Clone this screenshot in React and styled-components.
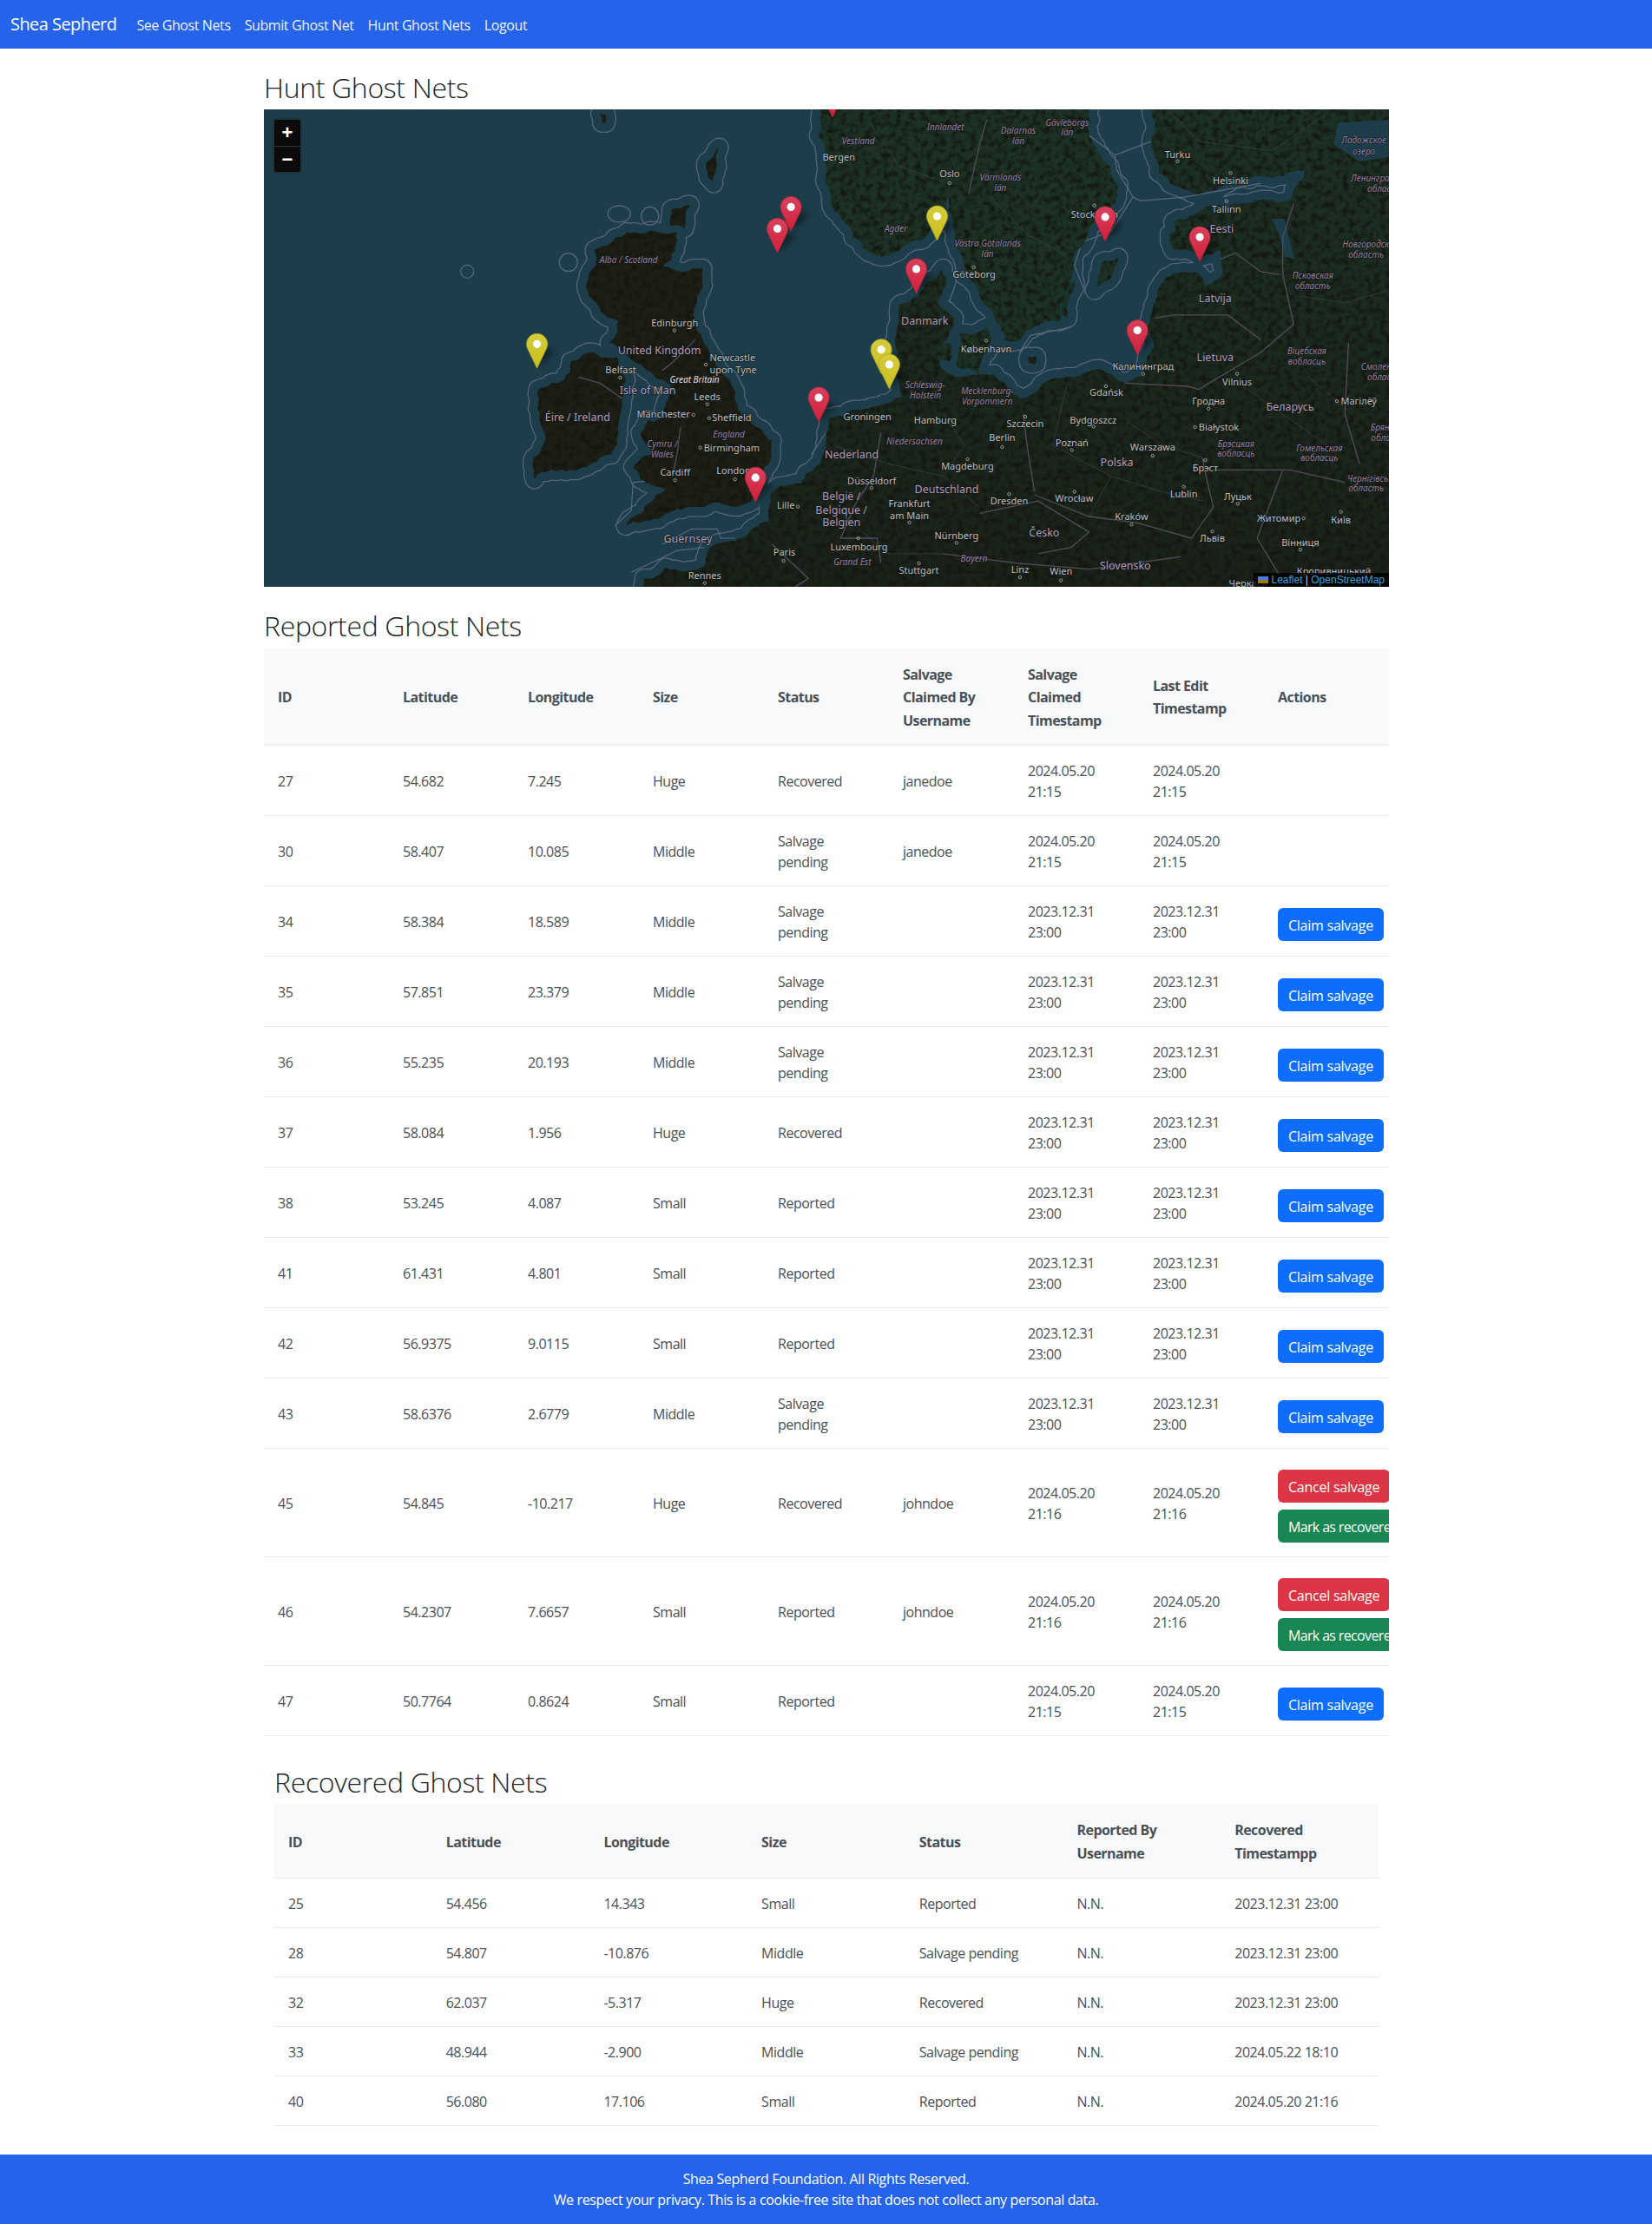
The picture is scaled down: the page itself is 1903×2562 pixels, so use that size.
import React from 'react'
import styled, { createGlobalStyle } from 'styled-components'

const GlobalStyle = createGlobalStyle`
  * { box-sizing: border-box; }
  html, body { margin: 0; padding: 0; }
  body {
    font-family: 'Open Sans', 'Noto Sans', sans-serif;
    font-size: 16px;
    line-height: 24px;
    letter-spacing: -0.56px;
    color: #212529;
    background: #fff;
  }
`

const reported = [
  ['27', '54.682', '7.245', 'Huge', 'Recovered', 'janedoe', '2024.05.20 21:15', '2024.05.20 21:15', 'none'],
  ['30', '58.407', '10.085', 'Middle', 'Salvage pending', 'janedoe', '2024.05.20 21:15', '2024.05.20 21:15', 'none'],
  ['34', '58.384', '18.589', 'Middle', 'Salvage pending', '', '2023.12.31 23:00', '2023.12.31 23:00', 'claim'],
  ['35', '57.851', '23.379', 'Middle', 'Salvage pending', '', '2023.12.31 23:00', '2023.12.31 23:00', 'claim'],
  ['36', '55.235', '20.193', 'Middle', 'Salvage pending', '', '2023.12.31 23:00', '2023.12.31 23:00', 'claim'],
  ['37', '58.084', '1.956', 'Huge', 'Recovered', '', '2023.12.31 23:00', '2023.12.31 23:00', 'claim'],
  ['38', '53.245', '4.087', 'Small', 'Reported', '', '2023.12.31 23:00', '2023.12.31 23:00', 'claim'],
  ['41', '61.431', '4.801', 'Small', 'Reported', '', '2023.12.31 23:00', '2023.12.31 23:00', 'claim'],
  ['42', '56.9375', '9.0115', 'Small', 'Reported', '', '2023.12.31 23:00', '2023.12.31 23:00', 'claim'],
  ['43', '58.6376', '2.6779', 'Middle', 'Salvage pending', '', '2023.12.31 23:00', '2023.12.31 23:00', 'claim'],
  ['45', '54.845', '-10.217', 'Huge', 'Recovered', 'johndoe', '2024.05.20 21:16', '2024.05.20 21:16', 'mine'],
  ['46', '54.2307', '7.6657', 'Small', 'Reported', 'johndoe', '2024.05.20 21:16', '2024.05.20 21:16', 'mine'],
  ['47', '50.7764', '0.8624', 'Small', 'Reported', '', '2024.05.20 21:15', '2024.05.20 21:15', 'claim'],
]

const recovered = [
  ['25', '54.456', '14.343', 'Small', 'Reported', 'N.N.', '2023.12.31 23:00'],
  ['28', '54.807', '-10.876', 'Middle', 'Salvage pending', 'N.N.', '2023.12.31 23:00'],
  ['32', '62.037', '-5.317', 'Huge', 'Recovered', 'N.N.', '2023.12.31 23:00'],
  ['33', '48.944', '-2.900', 'Middle', 'Salvage pending', 'N.N.', '2024.05.22 18:10'],
  ['40', '56.080', '17.106', 'Small', 'Reported', 'N.N.', '2024.05.20 21:16'],
]

// map coords were read off two crops, hence the two converters
const L = (x, y) => [x / 2.376 - 4, y / 2.8 - 6]
const R = (x, y) => [x / 2.376 + 656, y / 2.8 - 6]
const path = (pts, closed = true) =>
  'M' + pts.map(p => p[0].toFixed(1) + ' ' + p[1].toFixed(1)).join('L') + (closed ? 'Z' : '')

// midpoint displacement so the coasts stop looking like straight polygons
let seed = 11
const rnd = () => {
  seed = (seed * 16807) % 2147483647
  return seed / 2147483647 - 0.5
}
function roughen(pts, depth = 3) {
  let cur = pts
  for (let d = 0; d < depth; d++) {
    const next = []
    cur.forEach((p, i) => {
      const q = cur[(i + 1) % cur.length]
      const len = Math.hypot(q[0] - p[0], q[1] - p[1])
      next.push(p)
      if (len > 3 && len < 200) {
        const k = rnd() * len * 0.3
        next.push([(p[0] + q[0]) / 2 - ((q[1] - p[1]) / len) * k, (p[1] + q[1]) / 2 + ((q[0] - p[0]) / len) * k])
      }
    })
    cur = next
  }
  return cur
}
const landL = arr => path(roughen(arr.map(p => L(p[0], p[1]))))
const landR = arr => path(roughen(arr.map(p => R(p[0], p[1]))))
const left = (arr, closed) => path(arr.map(p => L(p[0], p[1])), closed)
const right = (arr, closed) => path(arr.map(p => R(p[0], p[1])), closed)

const britain = landL([
  [970, 432], [1040, 418], [1140, 412], [1135, 470], [1100, 525], [1210, 530], [1205, 600], [1185, 680],
  [1195, 730], [1225, 790], [1250, 850], [1300, 930], [1310, 990], [1350, 1035], [1400, 1085], [1395, 1150],
  [1370, 1200], [1345, 1280], [1240, 1285], [1170, 1300], [1110, 1320], [1090, 1338], [1000, 1360],
  [1060, 1290], [1110, 1240], [1040, 1210], [1020, 1170], [1080, 1130], [1040, 1060], [1060, 1020],
  [1110, 1010], [1110, 960], [1130, 920], [1080, 880], [1040, 840], [1000, 800], [955, 770], [980, 700],
  [930, 670], [900, 620], [920, 520], [915, 470],
])
const ireland = landL([
  [900, 800], [930, 815], [975, 815], [1000, 890], [990, 960], [980, 1060], [960, 1130], [850, 1180],
  [750, 1210], [745, 1150], [780, 1080], [770, 1040], [760, 920], [830, 890], [850, 830],
])
const orkney = landL([[1125, 340], [1175, 325], [1160, 400], [1125, 395]])
const shetland = landL([[1220, 190], [1255, 140], [1250, 200], [1240, 255], [1225, 220]])
const faroe = landL([[930, 32], [945, 32], [945, 60], [935, 60]])
const continent = path(roughen([
  ...[[1040, 1600], [1050, 1530], [1110, 1495], [1215, 1490], [1225, 1440], [1310, 1400], [1395, 1345],
    [1395, 1265], [1480, 1225], [1520, 1170], [1540, 1130]].map(p => L(p[0], p[1])),
  ...[[-20, 1060], [-10, 1010], [60, 985], [150, 965], [190, 945], [175, 800], [180, 650], [230, 620], [300, 530],
    [310, 570], [285, 640], [330, 690], [300, 770], [290, 840], [350, 880], [440, 870], [510, 950], [640, 880],
    [740, 860], [800, 900], [840, 880], [880, 780], [860, 720], [880, 640], [910, 560], [960, 540], [990, 540],
    [1020, 590], [1060, 560], [1060, 470], [1010, 490], [930, 470], [920, 420], [960, 375], [1010, 340], [1100, 320],
    [1250, 310], [1290, 215], [1170, 232], [1050, 275], [960, 275], [890, 220], [870, 120], [865, 0], [1600, 0],
    [1600, 1650], [-1400, 1650]].map(p => R(p[0], p[1])),
]))
const scandinavia = landR([
  [-30, 0], [-40, 100], [-20, 190], [-10, 280], [0, 340], [30, 380], [90, 470], [150, 490], [220, 440], [270, 400],
  [310, 340], [310, 290], [330, 400], [340, 470], [400, 620], [440, 680], [470, 760], [510, 760], [530, 730],
  [620, 700], [640, 600], [690, 440], [700, 400], [760, 330], [780, 260], [720, 150], [700, 100], [700, 0],
])
const zealand = landR([[345, 740], [420, 720], [425, 790], [400, 870], [340, 850]])
const funen = landR([[270, 780], [320, 770], [320, 830], [280, 830]])
const gotland = landR([[715, 600], [735, 510], [780, 495], [750, 570]])
const bornholm = landR([[535, 815], [555, 815], [555, 835], [535, 835]])
const oland = landR([[625, 680], [660, 570], [640, 690]])
const saaremaa = landR([[930, 380], [970, 370], [985, 400], [940, 440]])

const greenLand = [scandinavia, zealand, funen, gotland, oland, saaremaa]
const darkLand = [britain, ireland, orkney, shetland, faroe, bornholm]
const allLand = [...darkLand, ...greenLand, continent]

const borders = [
  left([[870, 880], [930, 900], [990, 950]], false),
  left([[1190, 760], [1130, 830], [1100, 860]], false),
  left([[1150, 1040], [1140, 1130], [1130, 1190]], false),
  left([[1400, 1420], [1500, 1530], [1460, 1560]], false),
  right([[520, 1000], [530, 1100], [550, 1250]], false),
  right([[550, 1260], [700, 1330], [830, 1350], [980, 1400]], false),
  right([[1010, 1140], [1020, 1200], [1040, 1300], [980, 1400]], false),
  right([[800, 900], [970, 910], [1000, 920], [1170, 800], [1260, 710], [1230, 550]], false),
  right([[880, 690], [930, 680], [1080, 680], [1170, 760]], false),
  right([[1060, 500], [1100, 480], [1170, 540], [1220, 550]], false),
  right([[1230, 550], [1230, 430], [1260, 320]], false),
  right([[1040, 1180], [1250, 1180], [1400, 1220]], false),
  right([[1410, 770], [1400, 1000], [1440, 1160]], false),
  right([[420, 50], [400, 130], [370, 290]], false),
  right([[130, 1060], [110, 1200], [60, 1290]], false),
  right([[60, 1290], [20, 1400], [120, 1400], [130, 1480]], false),
  right([[400, 1320], [560, 1280], [700, 1380], [650, 1430], [560, 1450]], false),
  right([[300, 1450], [500, 1480], [700, 1500], [950, 1460]], false),
  right([[1230, 1180], [1160, 1400], [1240, 1557]], false),
]

const faintBorders = [
  right([[300, 1000], [360, 1100], [300, 1200], [400, 1300]], false),
  right([[640, 900], [600, 1100], [760, 1200], [700, 1330]], false),
  right([[800, 1020], [900, 1100], [1010, 1140]], false),
  right([[1110, 900], [1230, 1000], [1350, 1100]], false),
  right([[430, 300], [530, 420], [640, 490]], false),
  right([[900, 0], [1000, 120], [1200, 150], [1350, 30]], false),
  right([[1280, 620], [1400, 640], [1520, 600]], false),
  right([[1300, 880], [1420, 1000]], false),
  right([[100, 60], [180, 200], [300, 250]], false),
  right([[0, 1100], [150, 1160], [300, 1200]], false),
  right([[0, 1300], [150, 1450], [300, 1450]], false),
  right([[760, 1200], [900, 1250], [1010, 1280]], false),
]
const seaLines = [
  right([[700, 100], [770, 165], [870, 120]], false),
  right([[770, 165], [775, 210], [820, 300], [840, 312], [960, 300], [1170, 255]], false),
  right([[820, 300], [760, 410], [680, 445], [660, 520], [690, 610]], false),
  right([[650, 720], [540, 745], [510, 800]], false),
  right([[-10, 1040], [-60, 1130]], false),
  left([[1020, 1220], [1120, 1210], [1190, 1240]], false),
  left([[1020, 1220], [1015, 1310], [970, 1360]], false),
  left([[1100, 1420], [1180, 1370], [1250, 1370], [1260, 1400], [1300, 1400]], false),
  left([[1015, 1510], [1140, 1440], [1215, 1430]], false),
]

const labels = [
  ['city', L(1134, 718), 'Edinburgh'], ['city', L(1292, 830), 'Newcastle'], ['city', L(1294, 868), 'upon Tyne'],
  ['city', L(986, 868), 'Belfast'], ['city', L(1223, 956), 'Leeds'], ['city', L(1103, 1012), 'Manchester'],
  ['city', L(1290, 1023), 'Sheffield'], ['city', L(1290, 1120), 'Birmingham'], ['city', L(1135, 1199), 'Cardiff'],
  ['city', L(1295, 1192), 'London'], ['city', L(1438, 1306), 'Lille'], ['city', L(1434, 1455), 'Paris'],
  ['city', L(1216, 1532), 'Rennes'], ['city', L(1583, 181), 'Bergen'],
  ['country', L(1092, 807), 'United Kingdom'], ['country', L(1060, 936), 'Isle of Man'],
  ['country', L(868, 1022), 'Éire / Ireland'], ['country', L(1170, 1414), 'Guernsey'],
  ['country', L(1590, 1278), 'België /'], ['country', L(1590, 1321), 'Belgique /'], ['country', L(1590, 1362), 'Belgien'],
  ['region', L(1008, 512), 'Alba / Scotland'], ['region', L(1282, 1074), 'England'], ['region', L(1100, 1106), 'Cymru /'],
  ['region', L(1100, 1139), 'Wales'], ['white', L(1188, 899), 'Great Britain'],
  ['region', R(307, 84), 'Innlandet'], ['region', R(506, 96), 'Dalarnas'], ['region', R(506, 129), 'län'],
  ['region', R(640, 69), 'Gävleborgs'], ['region', R(640, 102), 'län'], ['region', R(68, 129), 'Vestland'],
  ['region', R(457, 247), 'Värmlands'], ['region', R(457, 281), 'län'], ['region', R(171, 412), 'Agder'],
  ['region', R(422, 458), 'Västra Götalands'], ['region', R(422, 492), 'län'], ['region', R(1452, 127), 'Ладожское'],
  ['region', R(1452, 161), 'озеро'], ['region', R(1500, 250), 'Ленинградская'], ['region', R(1510, 283), 'область'],
  ['region', R(1470, 463), 'Новгородская'], ['region', R(1458, 496), 'область'], ['region', R(1312, 562), 'Псковская'],
  ['region', R(1312, 595), 'область'], ['region', R(1296, 807), 'Віцебская'], ['region', R(1296, 841), 'вобласць'],
  ['region', R(1510, 858), 'Смоленская'], ['region', R(1510, 891), 'область'], ['region', R(251, 915), 'Schleswig-'],
  ['region', R(252, 948), 'Holstein'], ['region', R(421, 936), 'Mecklenburg-'], ['region', R(421, 970), 'Vorpommern'],
  ['region', R(222, 1098), 'Niedersachsen'], ['region', R(1102, 1105), 'Брэсцкая'], ['region', R(1102, 1138), 'вобласць'],
  ['region', R(1330, 1119), 'Гомельская'], ['region', R(1330, 1152), 'вобласць'], ['region', R(1475, 1217), 'Чернігівська'],
  ['region', R(1458, 1250), 'область'], ['region', R(385, 1476), 'Bayern'], ['region', R(52, 1488), 'Grand Est'],
  ['region', R(1520, 1053), 'Брянская'], ['region', R(1520, 1086), 'область'],
  ['city', R(318, 236), 'Oslo'], ['city', R(942, 173), 'Turku'], ['city', R(1087, 258), 'Helsinki'],
  ['city', R(1076, 351), 'Tallinn'], ['city', R(715, 368), 'Stockholm'], ['city', R(385, 559), 'Göteborg'],
  ['city', R(418, 800), 'København'], ['city', R(848, 858), 'Калининград'], ['city', R(747, 942), 'Gdańsk'],
  ['city', R(93, 1018), 'Groningen'], ['city', R(279, 1029), 'Hamburg'], ['city', R(525, 1042), 'Szczecin'],
  ['city', R(711, 1029), 'Bydgoszcz'], ['city', R(462, 1087), 'Berlin'], ['city', R(653, 1104), 'Poznań'],
  ['city', R(874, 1116), 'Warszawa'], ['city', R(1105, 908), 'Vilnius'], ['city', R(1027, 970), 'Гродна'],
  ['city', R(1055, 1052), 'Białystok'], ['city', R(1438, 970), 'Магілёў'], ['city', R(367, 1179), 'Magdeburg'],
  ['city', R(1018, 1183), 'Брэст'], ['city', R(105, 1225), 'Düsseldorf'], ['city', R(208, 1300), 'Frankfurt'],
  ['city', R(208, 1338), 'am Main'], ['city', R(481, 1290), 'Dresden'], ['city', R(659, 1281), 'Wrocław'],
  ['city', R(959, 1269), 'Lublin'], ['city', R(1107, 1276), 'Луцьк'], ['city', R(816, 1342), 'Kraków'],
  ['city', R(1219, 1347), 'Житомир'], ['city', R(1389, 1353), 'Київ'], ['city', R(337, 1403), 'Nürnberg'],
  ['city', R(1037, 1410), 'Львів'], ['city', R(1278, 1425), 'Вінниця'], ['city', R(234, 1515), 'Stuttgart'],
  ['city', R(511, 1513), 'Linz'], ['city', R(623, 1517), 'Wien'], ['city', R(1370, 1517), 'Кропивницький'],
  ['city', R(1135, 1556), 'Черкаси'], ['city', R(70, 1439), 'Luxembourg'],
  ['country', R(1063, 414), 'Eesti'], ['country', R(1045, 638), 'Latvija'], ['country', R(250, 712), 'Danmark'],
  ['country', R(1045, 829), 'Lietuva'], ['country', R(1250, 988), 'Беларусь'], ['country', R(776, 1167), 'Polska'],
  ['country', R(310, 1253), 'Deutschland'], ['country', R(577, 1394), 'Česko'], ['country', R(799, 1502), 'Slovensko'],
  ['country', R(50, 1143), 'Nederland'],
]

const dots = [
  L(1133, 730), L(1219, 840), L(985, 882), L(1223, 968), L(1185, 1002), L(1228, 1013), L(1204, 1108), L(1135, 1213),
  L(1299, 1210), L(1471, 1298), L(1432, 1473), L(1216, 1545),
  R(318, 255), R(942, 184), R(1087, 222), R(1076, 313), R(714, 327), R(384, 526), R(418, 763), R(848, 870), R(746, 910),
  R(525, 1008), R(712, 1040), R(462, 1106), R(653, 1116), R(874, 1134), R(1105, 870), R(1027, 982), R(990, 1042),
  R(1378, 958), R(367, 1145), R(1018, 1148), R(104, 1238), R(208, 1349), R(481, 1258), R(660, 1250), R(959, 1234),
  R(1107, 1289), R(816, 1356), R(1287, 1336), R(1389, 1315), R(337, 1415), R(1037, 1378), R(1278, 1437),
  R(234, 1481), R(511, 1526), R(623, 1536), R(68, 1400),
]

const pins = [
  ['yellow', L(757, 852)], ['red', L(1452, 410)], ['red', L(1415, 480)], ['red', L(1528, 1025)], ['red', L(1355, 1283)],
  ['red', [655, 9]], ['yellow', R(284, 440)], ['red', R(227, 610)], ['red', R(744, 442)], ['red', R(1003, 507)],
  ['red', R(832, 808)], ['yellow', R(131, 870)], ['yellow', R(153, 918)],
]

const pinPath =
  'M12.5 .5C5.9 .5 .5 5.9 .5 12.5C.5 15.6 1.6 18.2 3 20.8L12.5 40.5L22 20.8C23.4 18.2 24.5 15.6 24.5 12.5C24.5 5.9 19.1 .5 12.5 .5Z'

function Pin({ color, at }) {
  return (
    <g transform={`translate(${(at[0] - 12.5).toFixed(1)} ${(at[1] - 40.5).toFixed(1)})`}>
      <path d="M13 40L30 25C33 21 29 16 24 17L15 22Z" fill="#000" opacity="0.4" filter="url(#pinShadow)" />
      <path d={pinPath} fill={`url(#pin-${color})`} stroke={color === 'red' ? '#b91f39' : '#b0a61e'} strokeWidth="0.8" />
      <circle cx="12.5" cy="12.5" r="4.6" fill="#fff" />
    </g>
  )
}

function MapDrawing() {
  return (
    <MapSvg viewBox="0 0 1296 550">
      <defs>
        <linearGradient id="pin-red" x1="0" y1="0" x2="0" y2="1">
          <stop offset="0" stopColor="#d9415c" />
          <stop offset="1" stopColor="#cf1f3a" />
        </linearGradient>
        <linearGradient id="pin-yellow" x1="0" y1="0" x2="0" y2="1">
          <stop offset="0" stopColor="#d6cc3c" />
          <stop offset="1" stopColor="#c8bd1e" />
        </linearGradient>
        <linearGradient id="mainland" gradientUnits="userSpaceOnUse" x1="0" y1="0" x2="0" y2="550">
          <stop offset="0" stopColor="#1c3224" />
          <stop offset="0.5" stopColor="#1b2a1e" />
          <stop offset="1" stopColor="#1a2218" />
        </linearGradient>
        <filter id="pinShadow" x="-40%" y="-40%" width="180%" height="180%">
          <feGaussianBlur stdDeviation="3.5" />
        </filter>
        <filter id="sat" x="0" y="0" width="100%" height="100%" colorInterpolationFilters="sRGB">
          <feTurbulence type="fractalNoise" baseFrequency="0.14" numOctaves="4" seed="7" result="n" />
          <feColorMatrix in="n" type="matrix" values="0 0 0 0 0.08  0 0 0 0 0.085  0 0 0 0 0.06  0 0 0 2.6 -1.1" result="dark" />
          <feComposite in="dark" in2="SourceAlpha" operator="in" result="spots" />
          <feMerge>
            <feMergeNode in="SourceGraphic" />
            <feMergeNode in="spots" />
          </feMerge>
        </filter>
      </defs>
      <rect width="1296" height="550" fill="#1d3d4a" />

      {allLand.map((d, i) => (
        <path key={i} d={d} fill="none" stroke="#5a687c" strokeWidth="23" strokeLinejoin="round" />
      ))}
      {allLand.map((d, i) => (
        <path key={i} d={d} fill="#1d3d4a" stroke="#1d3d4a" strokeWidth="20.6" strokeLinejoin="round" />
      ))}
      <RingMark cx={L(566, 540)[0]} cy={L(566, 540)[1]} rx="7.5" ry="7.5" />
      <RingMark cx={L(843, 510)[0]} cy={L(843, 510)[1]} rx="10.5" ry="10.5" />
      <RingMark cx={L(982, 354)[0]} cy={L(982, 354)[1]} rx="13" ry="9.5" />
      <RingMark cx={L(1066, 361)[0]} cy={L(1066, 361)[1]} rx="10" ry="10.5" />
      {seaLines.map((d, i) => (
        <path key={i} d={d} fill="none" stroke="#5a687c" strokeWidth="1.2" />
      ))}

      <g filter="url(#sat)">
        <path d={continent} fill="url(#mainland)" />
        {greenLand.map((d, i) => (
          <path key={i} d={d} fill="#1c3224" />
        ))}
        {darkLand.map((d, i) => (
          <path key={i} d={d} fill="#1d1f15" />
        ))}
      </g>
      <path d={right([[1380, 60], [1520, 50], [1520, 170], [1440, 185], [1370, 130]])} fill="#1d3d4a" />
      <path d={right([[1200, 370], [1235, 370], [1262, 500], [1235, 490], [1220, 420]])} fill="#1d3d4a" />

      {faintBorders.map((d, i) => (
        <path key={i} d={d} fill="none" stroke="#3a3e46" strokeWidth="0.8" />
      ))}
      {borders.map((d, i) => (
        <path key={i} d={d} fill="none" stroke="#554b5e" strokeWidth="1.3" />
      ))}
      {dots.map((p, i) => (
        <circle key={i} cx={p[0]} cy={p[1]} r="1.7" fill="none" stroke="#b4b4b4" strokeWidth="0.8" />
      ))}
      {labels.map(([kind, p, text], i) => (
        <MapLabel key={i} x={p[0]} y={p[1]} $kind={kind}>{text}</MapLabel>
      ))}
      {pins.map(([color, at], i) => (
        <Pin key={i} color={color} at={at} />
      ))}
    </MapSvg>
  )
}

function Row({ cells, actions }) {
  return (
    <tr>
      {cells.map((c, i) => <Td key={i}>{c}</Td>)}
      {actions !== undefined && (
        <ActionTd>
          {actions !== 'none' && (
            <Actions>
              {actions === 'claim' && <Button $color="#0d6efd">Claim salvage</Button>}
              {actions === 'mine' && <Button $color="#dc3545">Cancel salvage</Button>}
              {actions === 'mine' && <Button $color="#198754" $spacing="-0.65px">Mark as recovered</Button>}
            </Actions>
          )}
        </ActionTd>
      )}
    </tr>
  )
}

export default function App() {
  return (
    <>
      <GlobalStyle />
      <Navbar>
        <Brand>Shea Sepherd</Brand>
        <NavLink>See Ghost Nets</NavLink>
        <NavLink>Submit Ghost Net</NavLink>
        <NavLink>Hunt Ghost Nets</NavLink>
        <NavLink>Logout</NavLink>
      </Navbar>

      <Main>
        <Heading>Hunt Ghost Nets</Heading>
        <MapBox>
          <MapDrawing />
          <ZoomBar>
            <ZoomButton>+</ZoomButton>
            <ZoomButton>−</ZoomButton>
          </ZoomBar>
          <Attribution>
            <svg width="12" height="8" viewBox="0 0 12 8">
              <rect width="12" height="4" fill="#4C7BE1" />
              <rect y="4" width="12" height="4" fill="#9c7a1c" />
            </svg>
            {' '}<MapLink>Leaflet</MapLink> | <MapLink>OpenStreetMap</MapLink>
          </Attribution>
        </MapBox>

        <Heading>Reported Ghost Nets</Heading>
        <TableWrap>
          <Table>
            <thead>
              <tr>
                <Th>ID</Th>
                <Th>Latitude</Th>
                <Th>Longitude</Th>
                <Th>Size</Th>
                <Th>Status</Th>
                <Th>Salvage Claimed By Username</Th>
                <Th>Salvage Claimed Timestamp</Th>
                <Th>Last Edit Timestamp</Th>
                <Th>Actions</Th>
              </tr>
            </thead>
            <tbody>
              {reported.map(r => <Row key={r[0]} cells={r.slice(0, 8)} actions={r[8]} />)}
            </tbody>
          </Table>
        </TableWrap>

        <Nested>
          <Heading>Recovered Ghost Nets</Heading>
          <TableWrap>
            <Table>
              <thead>
                <tr>
                  <Th>ID</Th>
                  <Th>Latitude</Th>
                  <Th>Longitude</Th>
                  <Th>Size</Th>
                  <Th>Status</Th>
                  <Th>Reported By Username</Th>
                  <Th>Recovered Timestampp</Th>
                </tr>
              </thead>
              <tbody>
                {recovered.map(r => <Row key={r[0]} cells={r} />)}
              </tbody>
            </Table>
          </TableWrap>
        </Nested>
      </Main>

      <Footer>
        <div>Shea Sepherd Foundation. All Rights Reserved.</div>
        <div>We respect your privacy. This is a cookie-free site that does not collect any personal data.</div>
      </Footer>
    </>
  )
}

const Navbar = styled.nav`
  height: 56px;
  background: #2563eb;
  display: flex;
  align-items: center;
  padding: 0 12px;
  color: #fff;
`

const Brand = styled.a`
  font-size: 20px;
  line-height: 30px;
  margin-right: 15px;
`

const NavLink = styled.a`
  padding: 9px 8px 7px;
  letter-spacing: -0.4px;
  color: rgba(255, 255, 255, 0.95);
`

const Main = styled.main`
  width: 1296px;
  margin: 24px 0 0 304px;
`

const Heading = styled.h2`
  margin: 0 0 8px;
  padding-top: 2px;
  height: 38.4px;
  font-size: 32px;
  line-height: 38.4px;
  font-weight: 300;
  letter-spacing: -0.35px;
  color: #212529;
`

const MapBox = styled.div`
  position: relative;
  height: 550px;
  margin-bottom: 24px;
  overflow: hidden;
  background: #1d3d4a;
`

const MapSvg = styled.svg`
  display: block;
  width: 1296px;
  height: 550px;
  letter-spacing: 0;
`

const RingMark = styled.ellipse`
  fill: none;
  stroke: #5a687c;
  stroke-width: 1.2;
`

const labelColors = { city: '#bcbcbc', country: '#b09ab5', region: '#957d9f', white: '#e4e4e4' }

const MapLabel = styled.text`
  font-family: 'Noto Sans', sans-serif;
  text-anchor: middle;
  font-size: ${p => (p.$kind === 'country' ? 12.5 : p.$kind === 'city' ? 11 : 10)}px;
  font-style: ${p => (p.$kind === 'region' || p.$kind === 'white' ? 'italic' : 'normal')};
  fill: ${p => labelColors[p.$kind]};
  paint-order: stroke;
  stroke: rgba(20, 24, 24, 0.7);
  stroke-width: 1.5px;
`

const ZoomBar = styled.div`
  position: absolute;
  top: 10px;
  left: 10px;
  border: 2px solid rgba(30, 50, 60, 0.9);
  border-radius: 4px;
  overflow: hidden;
`

const ZoomButton = styled.div`
  width: 30px;
  height: 30px;
  background: #0b0b0b;
  color: #fff;
  font-family: 'Liberation Sans', sans-serif;
  font-size: 22px;
  font-weight: 700;
  letter-spacing: 0;
  line-height: 30px;
  text-align: center;
  & + & { border-top: 1px solid #333; }
`

const Attribution = styled.div`
  position: absolute;
  right: 0;
  bottom: 0;
  padding: 0 5px;
  background: rgba(0, 0, 0, 0.8);
  color: #d0d0d0;
  font-family: 'Liberation Sans', sans-serif;
  font-size: 12px;
  letter-spacing: 0;
  line-height: 16px;
`

const MapLink = styled.span`
  color: #3aa0d8;
`

const TableWrap = styled.div`
  overflow: hidden;
`

const Table = styled.table`
  width: 100%;
  table-layout: fixed;
  border-collapse: collapse;
`

const Th = styled.th`
  padding: 17px 16px 15px;
  background: #f8f9fa;
  color: #495057;
  font-weight: 700;
  line-height: 26.4px;
  text-align: left;
  vertical-align: middle;
  border-bottom: 1px solid #e9ecef;
`

const Td = styled.td`
  padding: 17px 16px 15px;
  color: #495057;
  letter-spacing: -0.48px;
  vertical-align: middle;
  border-bottom: 1px solid #e9ecef;
`

const ActionTd = styled(Td)`
  padding: 16px;
`

const Actions = styled.div`
  display: flex;
  flex-direction: column;
  align-items: flex-start;
  gap: 8px;
  padding-top: 8px;
`

const Button = styled.button`
  height: 38px;
  padding: 2px 12px 0;
  border: 0;
  border-radius: 6px;
  background: ${p => p.$color};
  color: #fff;
  font: inherit;
  letter-spacing: ${p => p.$spacing || '-0.25px'};
  white-space: nowrap;
`

const Nested = styled.section`
  margin: 32px 12px 0;
`

const Footer = styled.footer`
  margin-top: 33px;
  height: 81px;
  padding: 16px;
  background: #2563eb;
  color: #fff;
  letter-spacing: -0.37px;
  text-align: center;
`
